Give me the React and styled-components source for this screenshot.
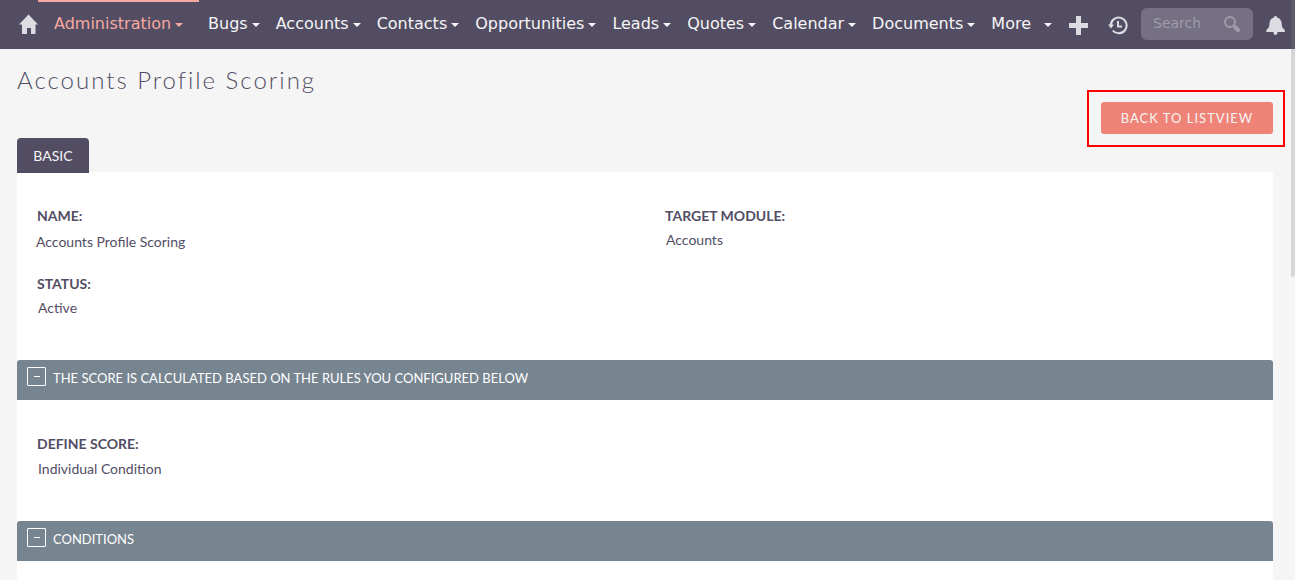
import React from "react";
import styled, { createGlobalStyle } from "styled-components";

const GlobalStyle = createGlobalStyle`
  *, *::before, *::after { box-sizing: border-box; }
  body {
    margin: 0;
    background: #f5f5f5;
    color: #534d64;
    font: 14px/20px Lato, "Liberation Sans", sans-serif;
  }
  h1, h2, dl, dt, dd, ul { margin: 0; padding: 0; }
  button, input { font: inherit; }
`;

const Page = styled.div`
  display: flex;
  flex-direction: column;
  min-height: 100vh;
`;

const NavBar = styled.header`
  display: flex;
  align-items: flex-start;
  height: 49px;
  padding: 0 10px 0 18px;
  background: #534d64;
  font-family: "DejaVu Sans", sans-serif;
  color: #f5f5f5;
`;

const IconLink = styled.a`
  display: flex;
  margin-top: 14px;
  color: #dddce2;
`;

const Menu = styled.ul`
  display: flex;
  list-style: none;
`;

const MenuButton = styled.button`
  display: flex;
  align-items: center;
  gap: ${(p) => (p.$wide ? 13 : 4)}px;
  height: 49px;
  margin-right: ${(p) => (p.$current ? 1 : 0)}px;
  padding: 0 ${(p) => (p.$current ? 16 : 8)}px 2px;
  border: 0;
  background: ${(p) => (p.$current ? "linear-gradient(#f5a9a0, #f5a9a0) top / 100% 2px no-repeat" : "none")};
  color: ${(p) => (p.$current ? "#f5a9a0" : "inherit")};
  font-size: 16px;
  line-height: 20px;
  white-space: nowrap;

  &::after {
    content: "";
    margin-top: 3px;
    border: 4px solid transparent;
    border-top-color: currentColor;
    border-bottom: 0;
  }
`;

const Tools = styled.div`
  display: flex;
  align-items: flex-start;
  margin-left: auto;
`;

const ToolButton = styled.button`
  display: flex;
  margin: 15px ${(p) => p.$gap}px 0 0;
  padding: 0;
  border: 0;
  background: none;
  color: #dddce2;
`;

const SearchBox = styled.form`
  display: flex;
  align-items: center;
  width: 112px;
  height: 32px;
  margin: 8px 13px 0 0;
  padding: 0 12px;
  border-radius: 6px;
  background: #757083;
  color: #9f9ba9;
`;

const SearchInput = styled.input`
  flex: 1;
  min-width: 0;
  height: 30px;
  padding: 0 0 2px;
  border: 0;
  outline: 0;
  background: none;
  color: #ffffff;
  font-size: 14px;

  &::placeholder { color: #9f9ba9; opacity: 1; }
`;

const SearchButton = styled.button`
  display: flex;
  padding: 0;
  border: 0;
  background: none;
  color: inherit;
`;

const Content = styled.main`
  display: flex;
  flex: 1;
  flex-direction: column;
  padding: 15px 22px 0 17px;
`;

const Title = styled.h1`
  font-size: 24px;
  font-weight: 300;
  line-height: 32px;
  letter-spacing: 2px;
`;

const Actions = styled.div`
  display: flex;
  justify-content: flex-end;
  padding-top: 6px;
`;

const Highlight = styled.div`
  position: relative;

  &::after {
    content: "";
    position: absolute;
    inset: -12px -12px -13px -14px;
    border: 2px solid #ff0000;
    pointer-events: none;
  }
`;

const ActionButton = styled.button`
  display: block;
  width: 172px;
  height: 32px;
  padding: 0;
  border: 0;
  border-radius: 3px;
  background: #f08377;
  color: #f5f5f5;
  font-size: 13px;
  letter-spacing: 1px;
  white-space: nowrap;
`;

const Tab = styled.button`
  align-self: flex-start;
  min-width: 72px;
  height: 35px;
  margin: 4px 0 -1px;
  padding: 0 16px;
  border: 0;
  border-radius: 4px 4px 0 0;
  background: #534d64;
  color: #f5f5f5;
  z-index: 1;
`;

const Panel = styled.section`
  flex: ${(p) => (p.$last ? "1 0 auto" : "0 0 auto")};
  background: #ffffff;
`;

const PanelHeading = styled.h2`
  display: flex;
  gap: 7px;
  height: 40px;
  padding: 7px 10px;
  border-radius: 3px 3px 0 0;
  background: #778591;
  color: #ffffff;
  font-size: 13px;
  font-weight: 400;
  line-height: 22px;
`;

const Toggle = styled.button`
  display: flex;
  align-items: center;
  justify-content: center;
  width: 19px;
  height: 19px;
  padding: 0;
  border: 1px solid #ffffff;
  border-radius: 1px;
  background: none;
  color: inherit;

  &::before {
    content: "";
    width: 6px;
    height: 1px;
    background: currentColor;
  }
`;

const Fields = styled.dl`
  display: grid;
  grid-template-columns: 1fr 1fr;
  gap: 22px 40px;
  padding: 34px 20px 42px;
`;

const Field = styled.div`
  dt {
    font-weight: 700;
    text-transform: uppercase;
  }
  dd {
    padding-top: ${(p) => p.$gap || 4}px;
    margin-left: ${(p) => (p.$text ? -1 : 1)}px;
  }
`;

const ScrollThumb = styled.div`
  position: fixed;
  top: 0;
  right: 0;
  width: 4px;
  height: 277px;
  border-radius: 0 0 2px 2px;
  background: rgba(128, 128, 128, 0.25);
`;

const menus = [
  "Bugs", "Accounts", "Contacts", "Opportunities", "Leads",
  "Quotes", "Calendar", "Documents",
];

export default function App() {
  return (
    <Page>
      <GlobalStyle />
      <NavBar>
        <IconLink href="#home" aria-label="Home">
          <svg width="20" height="20" viewBox="0 0 20 20" fill="currentColor">
            <path d="M10.500 0.500 20 10.500H17.500V20h-4.500v-6H9v6H4V10.500H1z" />
          </svg>
        </IconLink>
        <Menu>
          <li><MenuButton $current>Administration</MenuButton></li>
          {menus.map((name) => (
            <li key={name}><MenuButton>{name}</MenuButton></li>
          ))}
          <li><MenuButton $wide>More</MenuButton></li>
        </Menu>
        <Tools>
          <ToolButton $gap={20} aria-label="Create">
            <svg width="19" height="20" viewBox="0 0 19 20" fill="currentColor">
              <path d="M7 1h5v7h7v5h-7v7H7v-7H0V8h7z" />
            </svg>
          </ToolButton>
          <ToolButton $gap={13} aria-label="Recently viewed">
            <svg width="20" height="20" viewBox="0 0 20 20" fill="none" stroke="currentColor" strokeWidth="2">
              <path d="M2.800 10.500a7.900 7.900 0 1 1 2 5.200" />
              <path d="M10 6v5.500h4" />
              <path d="M0 9.500h6l-3 4z" fill="currentColor" stroke="none" />
            </svg>
          </ToolButton>
          <SearchBox onSubmit={(e) => e.preventDefault()}>
            <SearchInput type="text" placeholder="Search" aria-label="Search" />
            <SearchButton type="submit" aria-label="Run search">
              <svg width="18" height="18" viewBox="0 0 18 18" fill="none" stroke="currentColor">
                <circle cx="7" cy="7" r="5" strokeWidth="2" />
                <path d="m10.500 10.500 1.500 1.500" strokeWidth="2" />
                <path d="m12.500 12.500 2.500 2.500" strokeWidth="4" strokeLinecap="round" />
              </svg>
            </SearchButton>
          </SearchBox>
          <ToolButton $gap={0} aria-label="Notifications">
            <svg width="19" height="20" viewBox="0 0 19 20" fill="currentColor">
              <path d="M9.500 1c1 0 1.500.7 1.500 1.600 3 .8 4.500 3 4.700 6 .2 3.500.8 4.400 2.300 5.400.6.500.9 1 .9 3H11.500c0 2-.8 3-2 3s-2-1-2-3H.3c0-2 .3-2.500.9-3 1.500-1 2.100-1.900 2.300-5.400.2-3 1.700-5.200 4.500-6C8 1.700 8.500 1 9.500 1z" />
            </svg>
          </ToolButton>
        </Tools>
      </NavBar>
      <Content>
        <Title>Accounts Profile Scoring</Title>
        <Actions>
          <Highlight>
            <ActionButton>BACK TO LISTVIEW</ActionButton>
          </Highlight>
        </Actions>
        <Tab>BASIC</Tab>
        <Panel>
          <Fields>
            <Field $text $gap={6}><dt>Name:</dt><dd>Accounts Profile Scoring</dd></Field>
            <Field><dt>Target Module:</dt><dd>Accounts</dd></Field>
            <Field><dt>Status:</dt><dd>Active</dd></Field>
          </Fields>
        </Panel>
        <Panel>
          <PanelHeading>
            <Toggle aria-label="Collapse score rules" />
            THE SCORE IS CALCULATED BASED ON THE RULES YOU CONFIGURED BELOW
          </PanelHeading>
          <Fields>
            <Field $gap={5}><dt>Define Score:</dt><dd>Individual Condition</dd></Field>
          </Fields>
        </Panel>
        <Panel $last>
          <PanelHeading>
            <Toggle aria-label="Collapse conditions" />
            CONDITIONS
          </PanelHeading>
        </Panel>
      </Content>
      <ScrollThumb />
    </Page>
  );
}
